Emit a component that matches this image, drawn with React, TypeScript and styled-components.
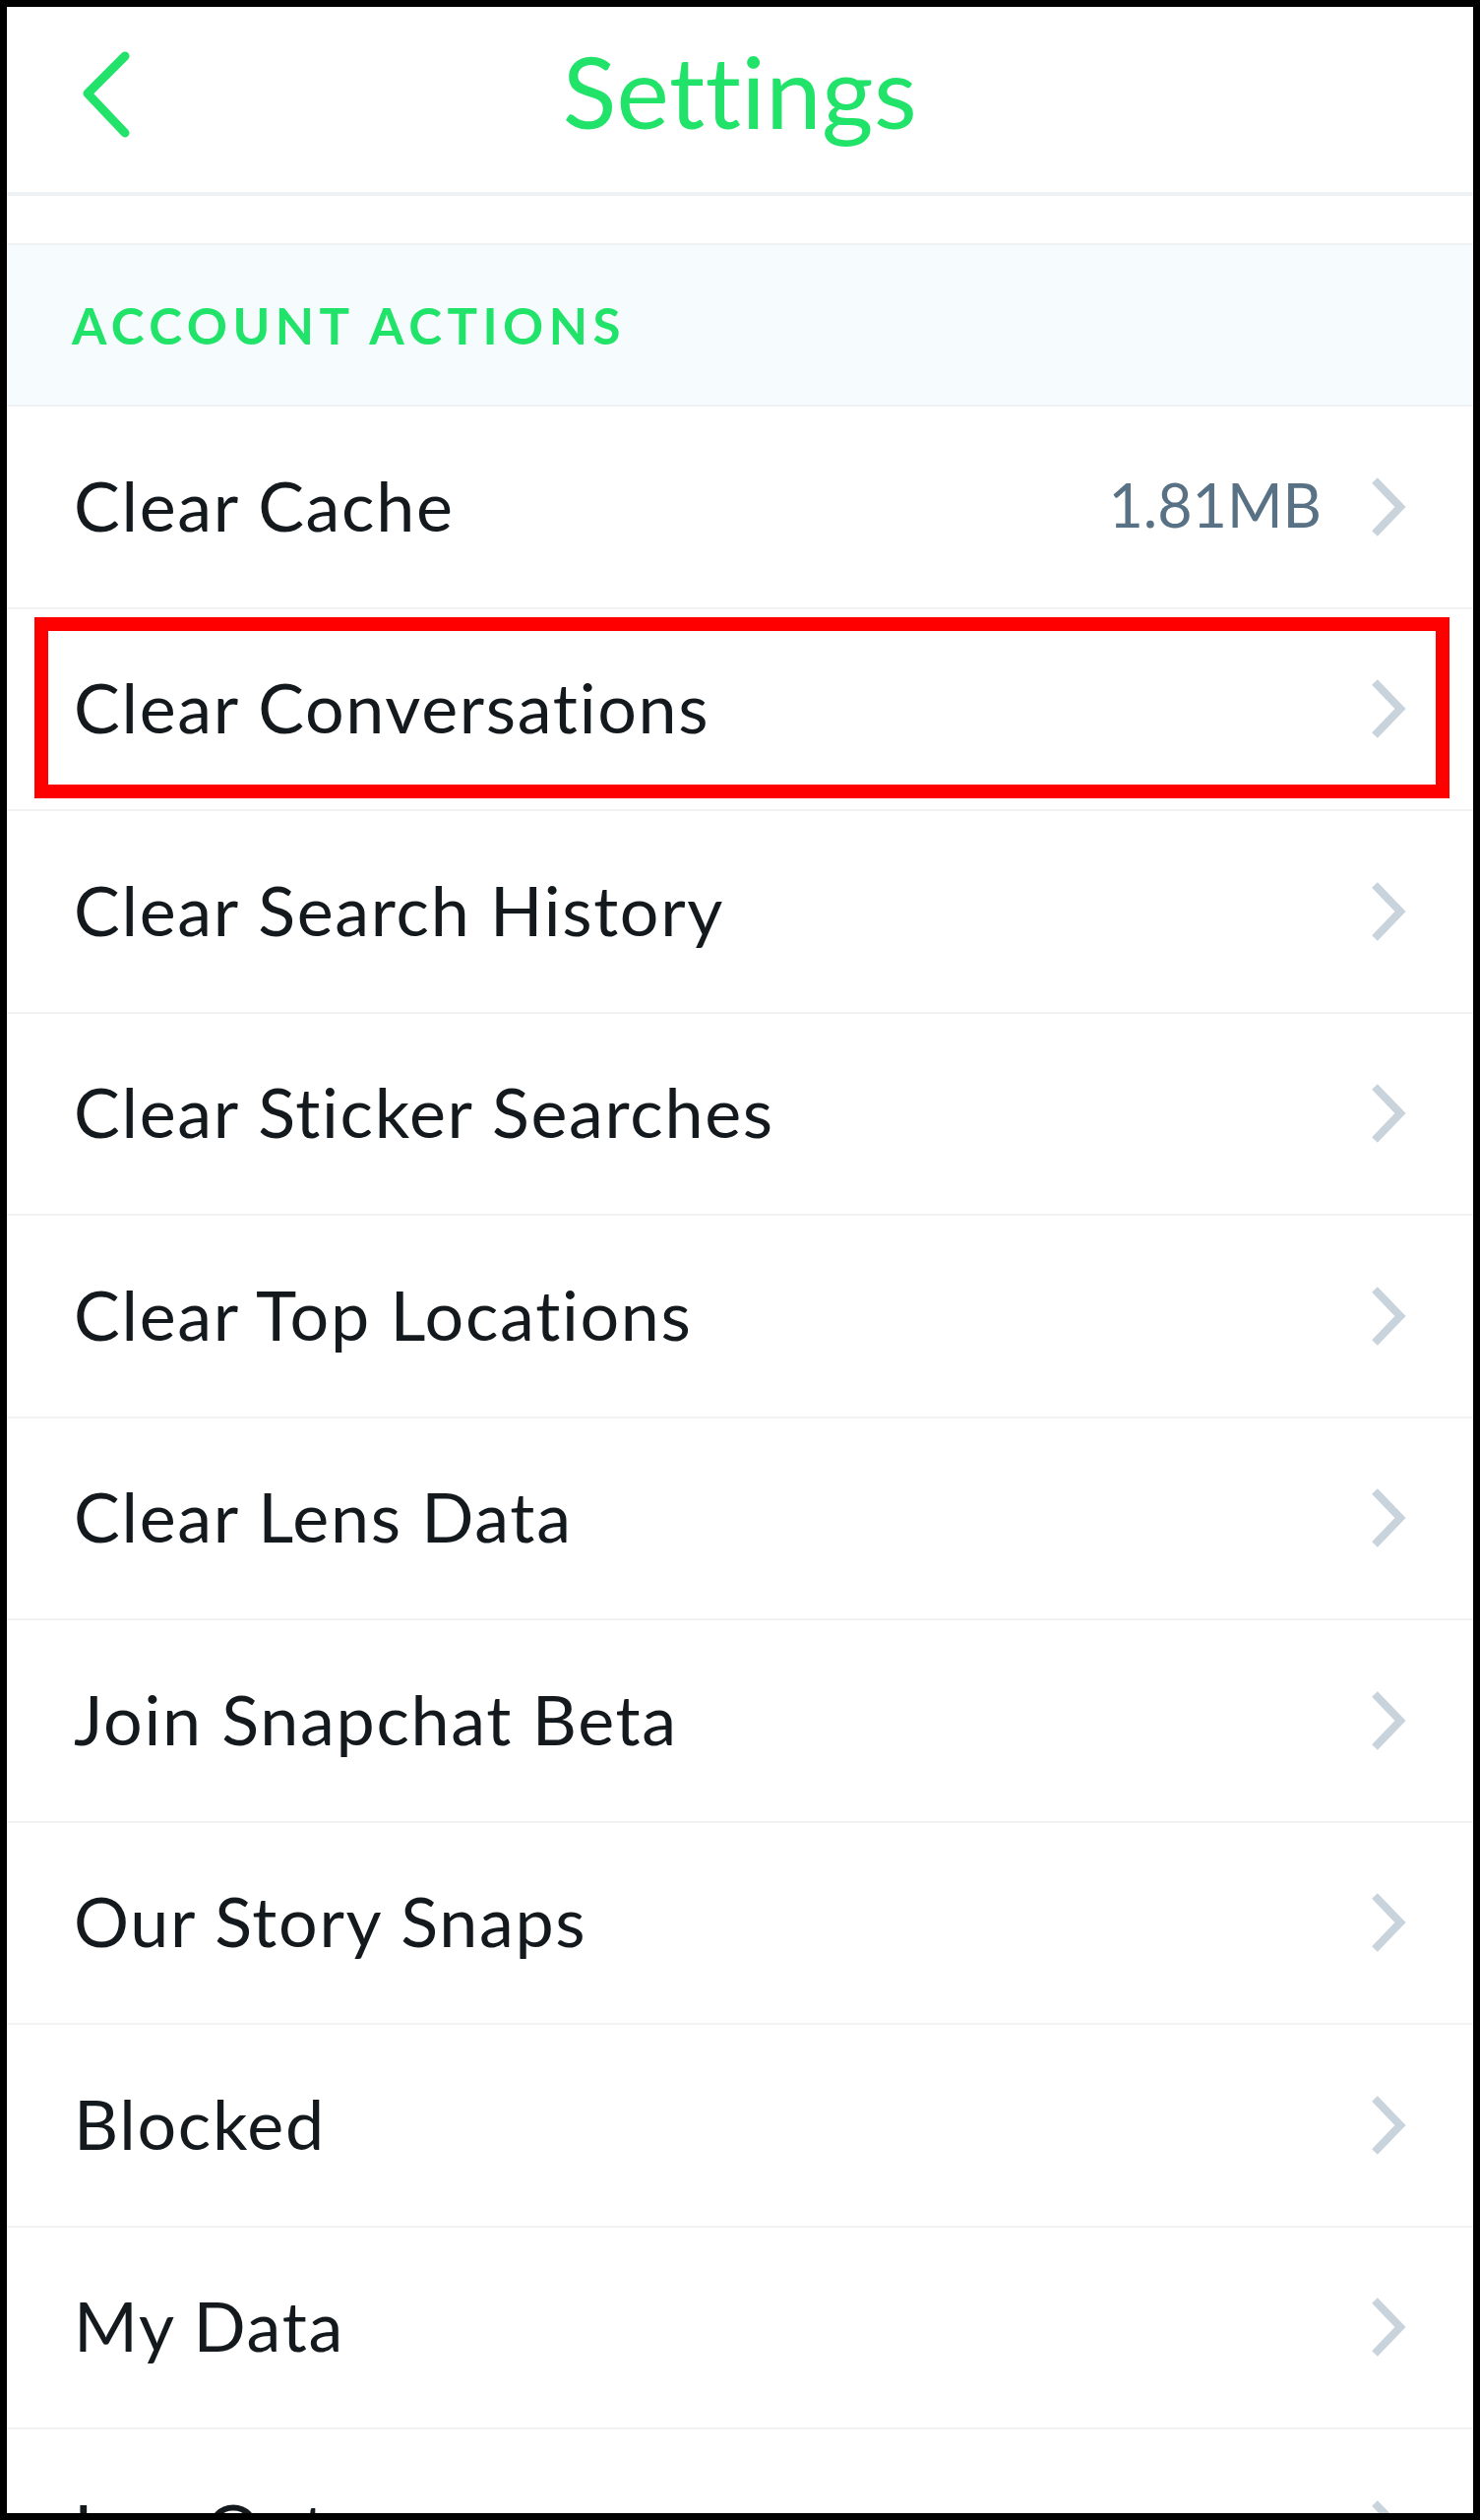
import React from "react";
import styled, { createGlobalStyle } from "styled-components";

const GlobalStyle = createGlobalStyle`
  body {
    margin: 0;
    background: #ffffff;
  }
`;

const Frame = styled.div`
  width: 1504px;
  height: 2560px;
  box-sizing: border-box;
  border: 7px solid #000000;
  background: #ffffff;
  overflow: hidden;
  font-family: Lato, "Open Sans", sans-serif;
`;

const Header = styled.header`
  height: 192px;
  box-sizing: border-box;
  border-bottom: 4px solid #eef2f5;
  display: grid;
  grid-template-columns: 1fr auto 1fr;
  align-items: center;
`;

const BackButton = styled.button`
  justify-self: start;
  margin: -8px 0 0 72px;
  padding: 0;
  border: none;
  background: none;
  display: flex;
`;

const Title = styled.h1`
  margin: -18px 0 0;
  font-size: 101px;
  font-weight: 400;
  color: #22e36a;
  letter-spacing: 0.5px;
`;

const Gap = styled.div`
  height: 48px;
  border-bottom: 2px solid #eef2f4;
`;

const SectionHeader = styled.div`
  height: 164px;
  box-sizing: border-box;
  background: #f6fcfd;
  border-bottom: 2px solid #eef2f4;
  display: flex;
  align-items: center;
  padding: 0 0 0 66px;
  font-size: 51px;
  font-weight: 700;
  letter-spacing: 5.5px;
  color: #22e36a;
`;

const Row = styled.div`
  position: relative;
  height: 205.5px;
  box-sizing: border-box;
  border-bottom: 2px solid #f0f2f4;
  display: flex;
  align-items: center;
  padding: 0 68px;
`;

const Label = styled.span`
  flex: 1;
  font-size: 70px;
  color: #14191d;
  letter-spacing: 1.7px;
  margin-top: -4px;
`;

const Value = styled.span`
  font-size: 61px;
  color: #587184;
  letter-spacing: 0;
  margin: -4px 50px 0 0;
`;

const Highlight = styled.div`
  position: absolute;
  left: 28px;
  right: 24px;
  top: 8px;
  bottom: 11px;
  border: 14px solid #ff0000;
  pointer-events: none;
`;

const BackIcon = () => (
  <svg width="56" height="92" viewBox="0 0 56 92">
    <polyline
      points="48,6 10,44 48,84"
      fill="none"
      stroke="#22e36a"
      strokeWidth="9"
      strokeLinecap="round"
      strokeLinejoin="round"
    />
  </svg>
);

const Chevron = () => (
  <svg width="36" height="60" viewBox="0 0 36 60">
    <polyline points="4,3 30,30 4,57" fill="none" stroke="#c8d3dc" strokeWidth="8" />
  </svg>
);

type Item = { label: string; value?: string; marked?: boolean };

const items: Item[] = [
  { label: "Clear Cache", value: "1.81MB" },
  { label: "Clear Conversations", marked: true },
  { label: "Clear Search History" },
  { label: "Clear Sticker Searches" },
  { label: "Clear Top Locations" },
  { label: "Clear Lens Data" },
  { label: "Join Snapchat Beta" },
  { label: "Our Story Snaps" },
  { label: "Blocked" },
  { label: "My Data" },
  { label: "Log Out" },
];

export default function App() {
  return (
    <>
      <GlobalStyle />
      <Frame>
        <Header>
          <BackButton aria-label="Back">
            <BackIcon />
          </BackButton>
          <Title>Settings</Title>
          <div />
        </Header>
        <Gap />
        <SectionHeader>ACCOUNT ACTIONS</SectionHeader>
        {items.map((item) => (
          <Row key={item.label}>
            <Label>{item.label}</Label>
            {item.value && <Value>{item.value}</Value>}
            <Chevron />
            {item.marked && <Highlight />}
          </Row>
        ))}
      </Frame>
    </>
  );
}
